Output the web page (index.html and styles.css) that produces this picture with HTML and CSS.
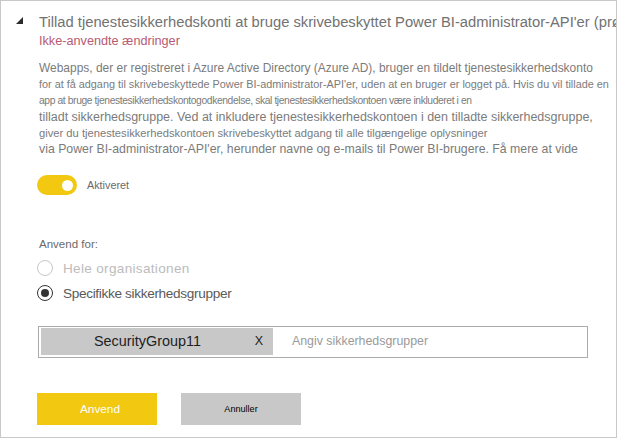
FILE: index.html
```html
<!DOCTYPE html>
<html lang="da">
<head>
<meta charset="utf-8">
<title>Indstilling</title>
<link rel="stylesheet" href="styles.css">
</head>
<body>
<div class="panel">
  <div class="header">
    <svg class="caret" width="7" height="7" viewBox="0 0 7 7" aria-hidden="true"><polygon points="7,0 7,7 0,7" fill="#2b2b2b"/></svg>
    <div class="head-text">
      <div class="title">Tillad tjenestesikkerhedskonti at bruge skrivebeskyttet Power BI-administrator-API'er (prøveversion)</div>
      <div class="subtitle">Ikke-anvendte ændringer</div>
    </div>
  </div>
  <div class="content">
    <div class="desc">
      <div class="line l1">Webapps, der er registreret i Azure Active Directory (Azure AD), bruger en tildelt tjenestesikkerhedskonto</div>
      <div class="line l2">for at få adgang til skrivebeskyttede Power BI-administrator-API'er, uden at en bruger er logget på. Hvis du vil tillade en</div>
      <div class="line l3">app at bruge tjenestesikkerhedskontogodkendelse, skal tjenestesikkerhedskontoen være inkluderet i en</div>
      <div class="line l4">tilladt sikkerhedsgruppe. Ved at inkludere tjenestesikkerhedskontoen i den tilladte sikkerhedsgruppe,</div>
      <div class="line l5">giver du tjenestesikkerhedskontoen skrivebeskyttet adgang til alle tilgængelige oplysninger</div>
      <div class="line l6">via Power BI-administrator-API'er, herunder navne og e-mails til Power BI-brugere. Få mere at vide</div>
    </div>
    <div class="toggle-row">
      <span class="toggle"><span class="knob"></span></span>
      <span class="toggle-label">Aktiveret</span>
    </div>
    <div class="apply-label">Anvend for:</div>
    <div class="radios">
      <div class="radio-row disabled"><span class="radio"></span><span class="radio-text r1">Hele organisationen</span></div>
      <div class="radio-row"><span class="radio checked"></span><span class="radio-text r2">Specifikke sikkerhedsgrupper</span></div>
    </div>
    <div class="picker">
      <div class="chip"><span class="chip-text">SecurityGroup11</span><span class="chip-x">X</span></div>
      <span class="placeholder">Angiv sikkerhedsgrupper</span>
    </div>
    <div class="buttons">
      <button class="btn primary">Anvend</button>
      <button class="btn secondary">Annuller</button>
    </div>
  </div>
</div>
</body>
</html>
```
FILE: styles.css
```css
html, body {
  margin: 0;
  padding: 0;
  background: #ffffff;
}
body {
  font-family: "Liberation Sans", Arial, sans-serif;
}
.panel {
  box-sizing: border-box;
  width: 617px;
  height: 438px;
  border: 1px solid #c8c8c8;
  overflow: hidden;
  padding-top: 11px;
}
.header {
  display: flex;
  align-items: flex-start;
  padding-left: 15px;
}
.caret {
  flex: none;
  margin-top: 5px;
  margin-right: 16px;
}
.head-text {
  min-width: 0;
}
.title {
  font-size: 14.75px;
  line-height: 20px;
  color: #727272;
  white-space: nowrap;
}
.subtitle {
  margin-top: 1px;
  font-size: 12.68px;
  line-height: 16px;
  color: #b65a73;
  white-space: nowrap;
}
.content {
  margin-left: 36px;
}
.desc {
  margin-top: 11px;
  padding-left: 2px;
  color: #7b7b7b;
}
.line {
  white-space: nowrap;
  line-height: 16.25px;
  height: 16.25px;
}
.l1 { font-size: 11.96px; }
.l2 { font-size: 10.85px; }
.l3 { font-size: 10.3px; letter-spacing: -0.39px; }
.l4 { font-size: 12.47px; }
.l5 { font-size: 11.2px; }
.l6 { font-size: 12.32px; }
.toggle-row {
  margin-top: 17.5px;
  display: flex;
  align-items: center;
  height: 20px;
}
.toggle {
  box-sizing: border-box;
  width: 40px;
  height: 20px;
  border-radius: 10px;
  background: #f2c811;
  display: flex;
  align-items: center;
  justify-content: flex-end;
  padding-right: 4px;
}
.knob {
  width: 11px;
  height: 11px;
  border-radius: 50%;
  background: #ffffff;
}
.toggle-label {
  margin-left: 10px;
  font-size: 10.8px;
  color: #6a6a6a;
}
.apply-label {
  margin-top: 40.5px;
  padding-left: 2px;
  font-size: 11.54px;
  line-height: 16px;
  color: #6a6a6a;
}
.radios {
  margin-top: 4px;
}
.radio-row {
  display: flex;
  align-items: center;
  height: 25px;
}
.radio {
  box-sizing: border-box;
  flex: none;
  width: 16px;
  height: 16px;
  border-radius: 50%;
  border: 1.5px solid #333333;
  display: flex;
  align-items: center;
  justify-content: center;
}
.disabled .radio {
  border-color: #c6c6c6;
}
.radio.checked::after {
  content: "";
  width: 8px;
  height: 8px;
  border-radius: 50%;
  background: #333333;
}
.radio-text {
  margin-left: 10px;
  font-size: 13.6px;
  line-height: 25px;
  color: #5a5a5a;
  white-space: nowrap;
}
.disabled .radio-text {
  color: #bcbcbc;
}
.r1 { letter-spacing: 0.3px; }
.r2 { letter-spacing: -0.33px; }
.picker {
  box-sizing: border-box;
  margin-top: 20px;
  margin-left: 1px;
  width: 550px;
  height: 32px;
  border: 1px solid #ababab;
  padding: 1px;
  display: flex;
  align-items: flex-start;
}
.chip {
  box-sizing: border-box;
  width: 232px;
  height: 27px;
  margin-left: 1px;
  background: #c8c8c8;
  display: flex;
  align-items: center;
  padding-left: 53px;
  padding-right: 10px;
}
.chip-text {
  font-size: 14.4px;
  color: #1e1e1e;
}
.chip-x {
  margin-left: auto;
  font-size: 12.5px;
  color: #1e1e1e;
}
.placeholder {
  margin-left: 19px;
  line-height: 27px;
  font-size: 12.36px;
  color: #9a9a9a;
  white-space: nowrap;
}
.buttons {
  margin-top: 35px;
  display: flex;
  gap: 24px;
}
.btn {
  width: 120px;
  height: 32px;
  border: none;
  padding: 0;
  margin: 0;
  font-family: "Liberation Sans", Arial, sans-serif;
  cursor: pointer;
}
.primary {
  background: #f2c811;
  color: #ffffff;
  font-size: 11.79px;
  padding-left: 6px;
}
.secondary {
  background: #c8c8c8;
  color: #000000;
  font-size: 9.1px;
}
```
